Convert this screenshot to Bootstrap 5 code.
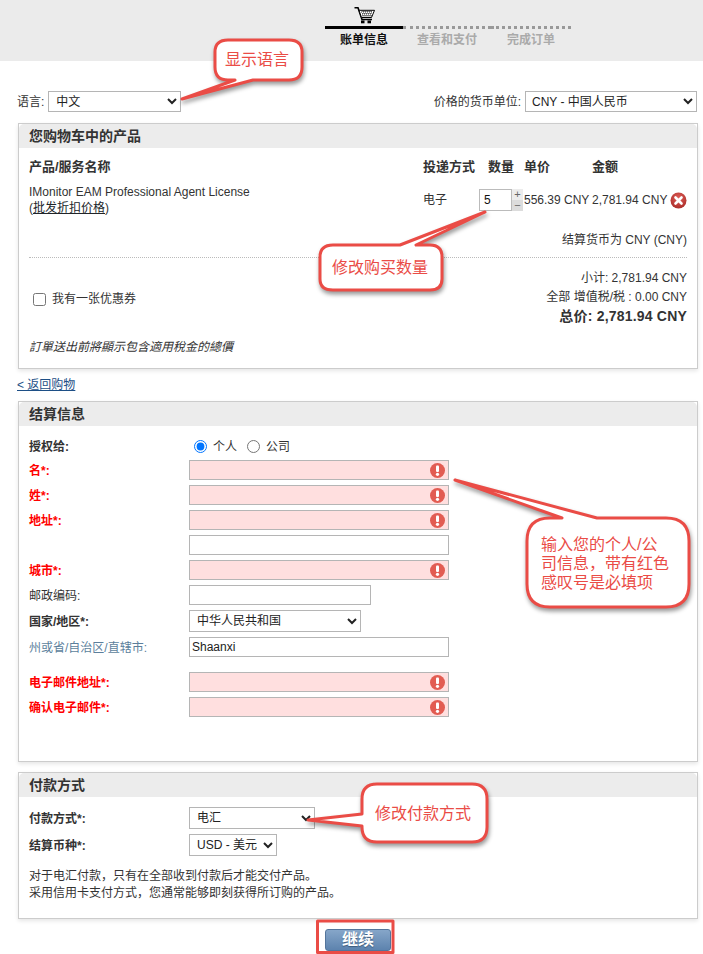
<!DOCTYPE html>
<html lang="zh">
<head>
<meta charset="utf-8">
<title>账单信息</title>
<link href="https://cdn.jsdelivr.net/npm/bootstrap@5.3.0/dist/css/bootstrap.min.css" rel="stylesheet">
<style>
html,body{margin:0;padding:0;background:#fff}
body{font-family:"Liberation Sans","Noto Sans CJK SC",sans-serif;font-size:12px;line-height:16px;color:#333}
.sheet{position:relative;width:703px;height:954px;overflow:hidden}
.topband{height:61px;background:#ebebeb;padding-left:325px}
.carticon{display:block;margin-left:29px;padding-top:7px;height:26px}
.steps{width:246px}
.stepitem{font-weight:700;color:#aaa;text-align:center;border-top:3px dotted #999;padding-top:3px;line-height:16px}
.stepitem.now{color:#111;border-top:3px solid #000}
.s1{width:78px}.s2{width:88px}.s3{width:80px}
.langrow{margin:30px 6px 11px 17px;height:21px}
.pick{box-sizing:border-box;height:21px;border:1px solid #b5b5b5;background-color:#fff;color:#222;font-size:12px;padding:0 3px;border-radius:0;font-family:inherit}
.pick-lang{width:133px;margin-left:4px}
.pick-cur{width:172px;margin-left:4px;padding-left:2px}
.pick-country{width:172px;height:22px}
.pick-pay{width:126px;height:22px}
.pick-settle{width:88px;height:22px}
.panel{margin-left:18px;width:680px;border:1px solid #ccc;border-radius:0;box-shadow:0 2px 4px rgba(0,0,0,.1);background:#fff;color:#333}
.panel-gap{margin-top:10px}
.panelhead{height:24px;background:#ececec;font-size:14px;font-weight:700;line-height:24px;padding:0 10px;border:0;border-radius:0;color:#333}
.panelbody{padding:0 10px}
.cols-h{margin-top:9px;height:20px;line-height:20px;font-size:13px;font-weight:700}
.c-name{width:394px;flex:none}.c-del{width:56px;flex:none}.c-qty{width:45px;flex:none}.c-unit{width:68px;flex:none;white-space:nowrap}
.c-total{width:74px;flex:none;white-space:nowrap}
.c-qtyh{padding-left:9px}
.prodrow{margin-top:7px;height:32px}
.link-dark{color:#1d4f86;text-decoration:underline}
.qtybox{box-sizing:border-box;width:33px;height:22px;border:1px solid #bbb;padding:0 4px;font-size:12px;color:#111;border-radius:0;font-family:inherit}
.spin{width:11px;height:22px}
.spin span{display:block;height:11px;line-height:10px;text-align:center;font-size:11px;color:#666;background:#ececec}
.spin span+span{background:#dcdcdc}
.deltool{margin-left:4px;flex:none}
.settle{margin-top:16px;text-align:right}
.dotrule{margin-top:9px;border-top:1px dotted #bbb}
.sumwrap{margin-top:11px}
.sumcol{text-align:right;line-height:19px}
.grand{font-size:14px;font-weight:700;letter-spacing:.2px}
.coupon{margin-top:22px;padding-left:4px;align-self:flex-start}
.coupon input{width:13px;height:13px;margin:0 6px 0 0}
.notebox{margin-top:13px;padding-bottom:13px;font-style:italic}
.backlink{margin:8px 0 8px 17px;display:block;color:#1d4f86;text-decoration:underline;line-height:16px}
.frow{height:20px;margin-top:5px}
.frow.tall{height:22px}
.frow.first{margin-top:4px}
.frow.gapped{margin-top:15px}
.frow.payfirst{margin-top:10px}
.flabel{width:160px;flex:none;padding-top:2px}
.reqd{color:#f00;font-weight:700}
.strongl{font-weight:700}
.mutedl{color:#5c7f9c}
.tinput{box-sizing:border-box;height:20px;width:260px;border:1px solid #b5b5b5;background-color:#fff;border-radius:0;padding:0 2px;font-size:12px;color:#222;font-family:inherit}
.tinput.shorter{width:182px}
.tinput.missing{background-color:#ffdfdf;background-image:url("data:image/svg+xml,%3Csvg xmlns='http://www.w3.org/2000/svg' width='15' height='15'%3E%3Ccircle cx='7.5' cy='7.5' r='7.5' fill='%23e25c52'/%3E%3Crect x='6' y='2.5' width='3' height='6.5' rx='1' fill='%23fff'/%3E%3Ccircle cx='7.5' cy='11.3' r='1.6' fill='%23fff'/%3E%3C/svg%3E");background-repeat:no-repeat;background-position:right 3px center}
.radrow{margin-top:10px;height:20px}
.radrow input{width:13px;height:13px;margin:0 6px 0 5px}
.radrow label{margin-right:5px;padding-top:2px}
.infobody{padding-bottom:44px}
.payhint{margin-top:12px;padding-bottom:16px;line-height:17px}
.gobtn{display:block;margin:10px 0 0 325px;width:66px;height:22px;padding:0;border:1px solid #54759b;border-radius:3px;background:linear-gradient(#86a6c9,#5d83ae);color:#fff;font-size:16px;font-weight:700;line-height:20px;text-shadow:0 1px 1px #3c5a7c}
.markup{position:absolute;left:0;top:0;pointer-events:none}
.markup path,.markup rect.boxr{fill:#fff;stroke:#ea4c46;stroke-width:3;stroke-linejoin:round}
.markup rect.boxr{fill:none}
.markup text{fill:#ea4c46;font-size:16px;font-family:"Noto Sans CJK SC",sans-serif}
.shade{filter:drop-shadow(1px 3px 2px rgba(0,0,0,.4))}
.bubblenote{position:absolute;left:541px;top:535px;width:135px;font:16px/19px "Liberation Sans","Noto Sans CJK SC",sans-serif;color:#ea4c46}
</style>
</head>
<body>
<div class="sheet">
  <div class="topband">
    <svg class="carticon" width="21" height="26" viewBox="0 0 21 19" aria-hidden="true">
      <path d="M0.5 0.8H4L8 12.5H18" fill="none" stroke="#000" stroke-width="1.6"/>
      <path d="M5 3.3H20.5L17.5 10.5H7.5Z" fill="#fff" stroke="#000" stroke-width="1"/>
      <path d="M7 5H19M8 7H18M8.5 9H17.5M9 4V10.5M11 4V10.5M13 4V10.5M15 4V10.5M17 4V10.5" stroke="#000" stroke-width=".8" stroke-dasharray="1 1"/>
      <rect x="7" y="13.5" width="3.5" height="2.8" fill="#000"/><rect x="13.5" y="13.5" width="3.5" height="2.8" fill="#000"/>
    </svg>
    <div class="steps d-flex">
      <div class="stepitem now s1">账单信息</div>
      <div class="stepitem s2">查看和支付</div>
      <div class="stepitem s3">完成订单</div>
    </div>
  </div>

  <div class="langrow d-flex justify-content-between align-items-center">
    <div class="d-flex align-items-center"><span>语言:</span>
      <select class="pick pick-lang"><option>中文</option></select></div>
    <div class="d-flex align-items-center"><span>价格的货币单位:</span>
      <select class="pick pick-cur"><option>CNY - 中国人民币</option></select></div>
  </div>

  <div class="card panel">
    <div class="card-header panelhead">您购物车中的产品</div>
    <div class="card-body panelbody">
      <div class="d-flex cols-h">
        <div class="c-name">产品/服务名称</div><div class="c-del">投递方式</div><div class="c-qty c-qtyh">数量</div><div class="c-unit">单价</div><div>金额</div>
      </div>
      <div class="d-flex align-items-center prodrow">
        <div class="c-name">IMonitor EAM Professional Agent License<br>(<a class="link-dark" href="#">批发折扣价格</a>)</div>
        <div class="c-del">电子</div>
        <div class="c-qty d-flex">
          <input class="qtybox" type="text" value="5">
          <div class="spin"><span>+</span><span>−</span></div>
        </div>
        <div class="c-unit">556.39 CNY</div>
        <div class="c-total">2,781.94 CNY</div>
        <svg class="deltool" width="17" height="17" viewBox="0 0 17 17" aria-hidden="true">
          <defs><radialGradient id="delfill" cx=".5" cy=".35" r=".7"><stop offset="0" stop-color="#e0605a"/><stop offset="1" stop-color="#a82a26"/></radialGradient></defs>
          <circle cx="8.5" cy="8.5" r="8" fill="url(#delfill)"/>
          <path d="M5.5 5.5L11.5 11.5M11.5 5.5L5.5 11.5" stroke="#fff" stroke-width="2.6" stroke-linecap="round"/>
        </svg>
      </div>
      <div class="settle">结算货币为 CNY (CNY)</div>
      <div class="dotrule"></div>
      <div class="d-flex justify-content-between sumwrap">
        <div class="coupon d-flex align-items-center"><input type="checkbox" id="cp"><label for="cp">我有一张优惠券</label></div>
        <div class="sumcol">
          <div>小计: 2,781.94 CNY</div>
          <div>全部 增值税/税 : 0.00 CNY</div>
          <div class="grand">总价: 2,781.94 CNY</div>
        </div>
      </div>
      <div class="notebox">訂單送出前將顯示包含適用稅金的總價</div>
    </div>
  </div>

  <a class="backlink" href="#">&lt; 返回购物</a>

  <div class="card panel">
    <div class="card-header panelhead">结算信息</div>
    <div class="card-body panelbody infobody">
      <div class="d-flex align-items-center radrow">
        <div class="flabel strongl">授权给:</div>
        <div class="d-flex align-items-center">
          <input type="radio" name="lic" id="r1" checked><label for="r1">个人</label>
          <input type="radio" name="lic" id="r2"><label for="r2">公司</label>
        </div>
      </div>
      <div class="d-flex align-items-center frow first"><div class="flabel reqd">名*:</div><input class="tinput missing" type="text"></div>
      <div class="d-flex align-items-center frow"><div class="flabel reqd">姓*:</div><input class="tinput missing" type="text"></div>
      <div class="d-flex align-items-center frow"><div class="flabel reqd">地址*:</div><input class="tinput missing" type="text"></div>
      <div class="d-flex align-items-center frow"><div class="flabel"></div><input class="tinput" type="text"></div>
      <div class="d-flex align-items-center frow"><div class="flabel reqd">城市*:</div><input class="tinput missing" type="text"></div>
      <div class="d-flex align-items-center frow"><div class="flabel">邮政编码:</div><input class="tinput shorter" type="text"></div>
      <div class="d-flex align-items-center frow tall"><div class="flabel strongl">国家/地区*:</div><select class="pick pick-country"><option>中华人民共和国</option></select></div>
      <div class="d-flex align-items-center frow"><div class="flabel mutedl">州或省/自治区/直辖市:</div><input class="tinput" type="text" value="Shaanxi"></div>
      <div class="d-flex align-items-center frow gapped"><div class="flabel reqd">电子邮件地址*:</div><input class="tinput missing" type="text"></div>
      <div class="d-flex align-items-center frow"><div class="flabel reqd">确认电子邮件*:</div><input class="tinput missing" type="text"></div>
    </div>
  </div>

  <div class="card panel panel-gap">
    <div class="card-header panelhead">付款方式</div>
    <div class="card-body panelbody">
      <div class="d-flex align-items-center frow tall payfirst"><div class="flabel strongl">付款方式*:</div><select class="pick pick-pay"><option>电汇</option></select></div>
      <div class="d-flex align-items-center frow tall"><div class="flabel strongl">结算币种*:</div><select class="pick pick-settle"><option>USD - 美元</option></select></div>
      <div class="payhint">对于电汇付款，只有在全部收到付款后才能交付产品。<br>采用信用卡支付方式，您通常能够即刻获得所订购的产品。</div>
    </div>
  </div>

  <button class="btn gobtn" type="button">继续</button>

  <svg class="markup" width="703" height="954" viewBox="0 0 703 954" aria-label="标注">
    <g class="shade">
      <path d="M182 99L235 80H228Q215 80 215 67V52Q215 40 228 40H289Q302 40 302 52V67Q302 80 289 80H253Z"/>
      <path d="M485 212L416 245H430Q442 245 442 257V279Q442 290 430 290H333Q320 290 320 279V257Q320 245 333 245H400Z"/>
      <path d="M455 480L562 518H550Q527 518 527 541V584Q527 607 550 607H666Q689 607 689 584V541Q689 518 666 518H597Z"/>
      <path d="M308 820L362 814V799Q362 784 377 784H472Q487 784 487 799V827Q487 842 472 842H377Q362 842 362 827V826Z"/>
    </g>
    <text x="225" y="65">显示语言</text>
    <text x="332" y="273">修改购买数量</text>
    <text x="375" y="819">修改付款方式</text>
    <rect class="boxr" x="317.5" y="921" width="75.5" height="31.5"/>
  </svg>
  <div class="bubblenote">输入您的个人/公<br>司信息，带有红色<br>感叹号是必填项</div>
</div>
</body>
</html>
